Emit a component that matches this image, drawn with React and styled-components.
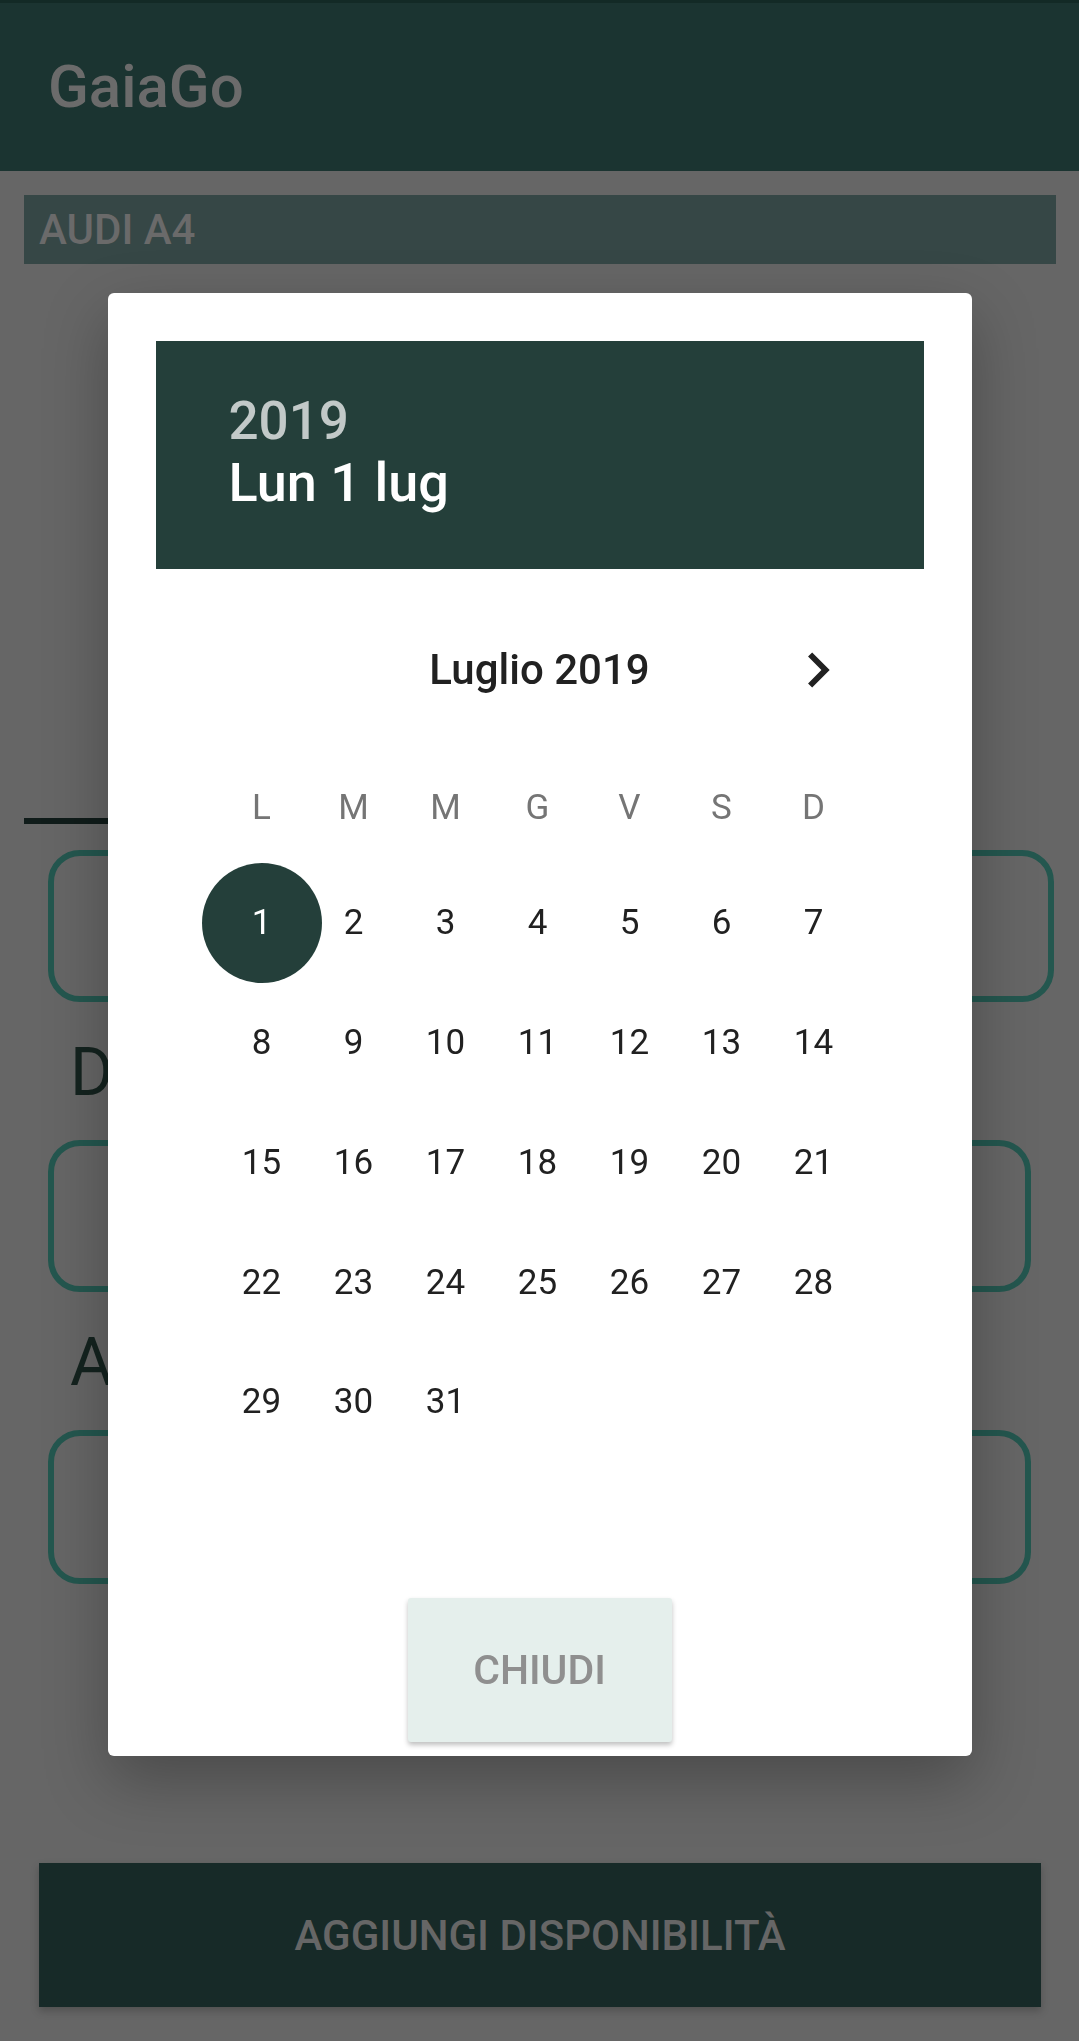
import React from 'react'
import styled, { createGlobalStyle } from 'styled-components';

const GlobalStyle = createGlobalStyle`
    html, body {
        margin: 0;
        padding: 0;
    }
    body {
        background: #666666;
        font-family: Roboto, "Noto Sans", "Liberation Sans", sans-serif;
    }
    * {
        box-sizing: border-box;
    }
`;

const WEEKDAYS = ['L', 'M', 'M', 'G', 'V', 'S', 'D'];
const DAYS = Array.from({ length: 31 }, (_, i) => i + 1);

function ChevronRight() {
    return (
        <svg width="70" height="70" viewBox="0 0 24 24" fill="#212121">
            <path d="M10 6L8.59 7.41 13.17 12l-4.58 4.59L10 18l6-6z" />
        </svg>
    )
}

function App() {
    const selected = 1;

    return (
        <>
            <GlobalStyle />
            <Page>
                <StatusStrip />
                <AppBar>
                    <AppTitle>GaiaGo</AppTitle>
                </AppBar>
                <CarBar>AUDI A4</CarBar>
                <Divider />
                <FieldBox $wide />
                <FieldLabel>Dalle</FieldLabel>
                <FieldBox />
                <FieldLabel>Alle</FieldLabel>
                <FieldBox $tall />
                <AddButton>Aggiungi disponibilità</AddButton>
            </Page>

            <Scrim>
                <Dialog>
                    <Header>
                        <Year>2019</Year>
                        <DateLabel>Lun 1 lug</DateLabel>
                    </Header>

                    <MonthRow>
                        <MonthTitle>Luglio 2019</MonthTitle>
                        <NextButton aria-label="Mese successivo">
                            <ChevronRight />
                        </NextButton>
                    </MonthRow>

                    <WeekRow>
                        {WEEKDAYS.map((d, i) => (
                            <WeekDay key={i}>{d}</WeekDay>
                        ))}
                    </WeekRow>

                    <DayGrid>
                        {DAYS.map((d) => (
                            <DayCell key={d}>
                                <DayNumber $selected={d === selected}>{d}</DayNumber>
                            </DayCell>
                        ))}
                    </DayGrid>

                    <Footer>
                        <CloseButton>Chiudi</CloseButton>
                    </Footer>
                </Dialog>
            </Scrim>
        </>
    )
}

const Page = styled.div`
    min-height: 100vh;
    display: flex;
    flex-direction: column;
    background: #666666;
`;

const StatusStrip = styled.div`
    height: 3px;
    background: #132a26;
`;

const AppBar = styled.header`
    height: 168px;
    background: #1b3431;
    display: flex;
    align-items: center;
    padding-left: 48px;
`;

const AppTitle = styled.h1`
    margin: 0;
    font-size: 60px;
    line-height: 70px;
    font-weight: 500;
    color: #6b6b6b;
`;

const CarBar = styled.div`
    margin: 24px 23px 0 24px;
    height: 69px;
    background: #364746;
    display: flex;
    align-items: center;
    padding-left: 15px;
    font-size: 42px;
    font-weight: 500;
    color: #6a6a6a;
`;

const Divider = styled.div`
    margin: 554px 0 0 24px;
    width: 300px;
    height: 6px;
    background: #101c1a;
`;

const FieldBox = styled.div`
    margin: ${p => (p.$wide ? '26px 25px 0 48px' : '27px 48px 0 48px')};
    height: ${p => (p.$tall ? '154px' : '152px')};
    border: 6px solid #24574f;
    border-radius: 32px;
`;

const FieldLabel = styled.div`
    margin-top: 31px;
    padding-left: 70px;
    font-size: 66px;
    line-height: 80px;
    color: #14231f;
`;

const AddButton = styled.button`
    margin: auto 38px 34px 39px;
    height: 144px;
    border: none;
    background: #172a28;
    box-shadow: 0 4px 8px rgba(0, 0, 0, 0.22);
    font-family: inherit;
    font-size: 42px;
    font-weight: 500;
    text-transform: uppercase;
    color: #666666;
`;

const Scrim = styled.div`
    position: fixed;
    inset: 0;
    display: flex;
    justify-content: center;
    align-items: flex-start;
    padding-top: 293px;
`;

const Dialog = styled.div`
    width: 864px;
    background: #ffffff;
    border-radius: 6px;
    padding: 48px 48px 14px;
    display: flex;
    flex-direction: column;
    box-shadow: 0 24px 64px rgba(0, 0, 0, 0.28);
`;

const Header = styled.div`
    height: 228px;
    background: #243f3a;
    padding: 50px 0 0 73px;
`;

const Year = styled.div`
    font-size: 53px;
    line-height: 60px;
    font-weight: 500;
    color: rgba(255, 255, 255, 0.72);
`;

const DateLabel = styled.div`
    font-size: 54px;
    line-height: 64px;
    font-weight: 500;
    color: #ffffff;
`;

const MonthRow = styled.div`
    margin-top: 51px;
    height: 100px;
    display: grid;
    grid-template-columns: 1fr auto 1fr;
    align-items: center;
`;

const MonthTitle = styled.div`
    grid-column: 2;
    font-size: 42px;
    line-height: 48px;
    font-weight: 500;
    color: #212121;
`;

const NextButton = styled.button`
    grid-column: 3;
    justify-self: end;
    margin-right: 71px;
    width: 70px;
    height: 70px;
    padding: 0;
    border: none;
    background: transparent;
    display: flex;
`;

const WeekRow = styled.div`
    margin: 42px 0 0 60px;
    height: 92px;
    display: grid;
    grid-template-columns: repeat(7, 92px);
    align-items: center;
`;

const WeekDay = styled.div`
    text-align: center;
    font-size: 35px;
    line-height: 40px;
    color: #757575;
`;

const DayGrid = styled.div`
    margin: 9px 0 0 60px;
    display: grid;
    grid-template-columns: repeat(7, 92px);
    grid-auto-rows: 119.75px;
`;

const DayCell = styled.div`
    display: flex;
    align-items: center;
    justify-content: center;
`;

const DayNumber = styled.span`
    flex-shrink: 0;
    width: 120px;
    height: 120px;
    border-radius: 50%;
    display: flex;
    align-items: center;
    justify-content: center;
    font-size: 35px;
    color: ${p => (p.$selected ? '#ffffff' : '#212121')};
    background: ${p => (p.$selected ? '#243f3a' : 'transparent')};
`;

const Footer = styled.div`
    margin-top: 136px;
    display: flex;
    justify-content: center;
`;

const CloseButton = styled.button`
    width: 264px;
    height: 144px;
    border: none;
    border-radius: 3px;
    background: #e5efec;
    box-shadow: 0 3px 5px rgba(0, 0, 0, 0.25);
    font-family: inherit;
    font-size: 41px;
    font-weight: 500;
    text-transform: uppercase;
    color: #8f8f8f;
`;

export default App;
